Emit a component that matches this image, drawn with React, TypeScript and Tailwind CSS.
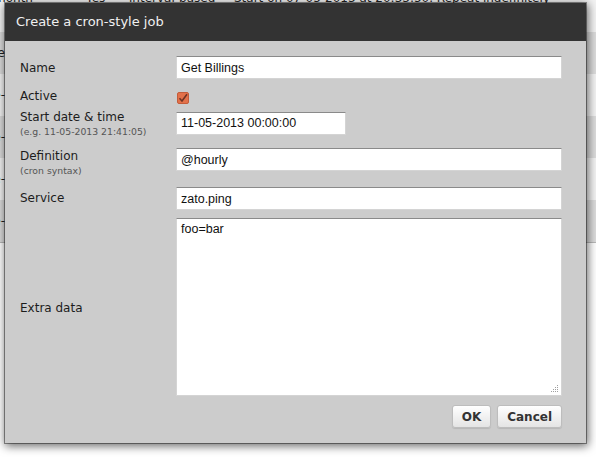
import React from "react"

const rows = [
  { bg: "bg-[#dcdcdc]", text: "e" },
  { bg: "bg-[#f3f3f3]", text: "e-" },
  { bg: "bg-[#dcdcdc]", text: "e-" },
  { bg: "bg-[#f3f3f3]", text: "e-" },
  { bg: "bg-[#dcdcdc]", text: "e-" },
]

function Field({ value, width = "w-[386px]" }: { value: string; width?: string }) {
  return (
    <input
      readOnly
      value={value}
      className={`${width} h-[23px] bg-white border border-[#d4d4d4] border-t-[#8a8a8a] px-[4px] text-[12.5px] leading-[15px] text-[#111] outline-none font-['Liberation_Sans',Arial,sans-serif]`}
    />
  )
}

function Label({ title, hint }: { title: string; hint?: string }) {
  return (
    <div className="w-[156px] shrink-0">
      <div className="text-[12px] leading-[15px] text-[#1c1c1c]">{title}</div>
      {hint && <div className="text-[9.3px] leading-[13px] text-[#555]">{hint}</div>}
    </div>
  )
}

export default function App() {
  return (
    <div className="relative w-[596px] h-[457px] overflow-hidden bg-white font-['DejaVu_Sans',Verdana,sans-serif]">
      {/* table behind the dialog */}
      <div className="flex flex-col">
        <div className="h-[32px] bg-[#f3f3f3] overflow-hidden">
          <div className="-mt-[9px] flex text-[12px] leading-[14px] text-[#222] whitespace-nowrap">
            <span className="w-[92px] -ml-[6px]">month</span>
            <span className="w-[43px]">Yes</span>
            <span className="w-[105px]">interval-based</span>
            <span>Start on 07-05-2013 at 20:33:50. Repeat indefinitely</span>
          </div>
        </div>
        {rows.map((r, i) => (
          <div key={i} className={`h-[42px] ${r.bg} flex items-center overflow-hidden`}>
            <span className="text-[12px] text-[#222] -ml-[8px] w-[13px] text-right">{r.text}</span>
          </div>
        ))}
        <div className="h-px bg-[#b8b8b8]" />
      </div>

      {/* dialog */}
      <div className="absolute left-[5px] top-[3px] w-[581px] h-[440px] bg-[#cccccc] shadow-[0_0_0_1px_rgba(0,0,0,0.4),1px_2px_9px_1px_rgba(0,0,0,0.6)] flex flex-col">
        <div className="h-[38px] bg-[#333333] flex items-center pl-[11px] text-[13px] text-[#f0f0f0]">
          Create a cron-style job
        </div>

        <div className="flex flex-col pl-[15px] pt-[15px]">
          <div className="flex items-start">
            <div className="mt-[5px]"><Label title="Name" /></div>
            <Field value="Get Billings" />
          </div>

          <div className="flex items-start mt-[9px]">
            <div className="mt-[1px]"><Label title="Active" /></div>
            <div className="mt-[4px] ml-[1px] w-[12px] h-[12px] rounded-[2px] bg-[#e3714a] border border-[#c45c3a] flex items-center justify-center">
              <svg width="10" height="10" viewBox="0 0 10 10">
                <path d="M1.5 5.2 L4 8 L9 1.2" fill="none" stroke="#6e3424" strokeWidth="1.6" />
              </svg>
            </div>
          </div>

          <div className="flex items-start mt-[5px]">
            <div className="mt-[1px]"><Label title="Start date & time" hint="(e.g. 11-05-2013 21:41:05)" /></div>
            <div className="mt-[1px]"><Field value="11-05-2013 00:00:00" width="w-[170px]" /></div>
          </div>

          <div className="flex items-start mt-[10px]">
            <div className="mt-[1px]"><Label title="Definition" hint="(cron syntax)" /></div>
            <Field value="@hourly" />
          </div>

          <div className="flex items-start mt-[10px]">
            <div className="mt-[4px]"><Label title="Service" /></div>
            <Field value="zato.ping" />
          </div>

          <div className="flex items-center mt-[8px]">
            <div className="mt-[2px]"><Label title="Extra data" /></div>
            <div className="relative">
              <textarea
                readOnly
                value="foo=bar"
                className="block w-[386px] h-[178px] resize-none bg-white border border-[#d4d4d4] border-t-[#8a8a8a] px-[4px] pt-[3px] text-[12.5px] leading-[15px] text-[#111] outline-none font-['Liberation_Sans',Arial,sans-serif]"
              />
              <svg className="absolute right-[3px] bottom-[3px]" width="9" height="9" viewBox="0 0 9 9">
                <g fill="#a0a0a0">
                  <rect x="7" y="1" width="1" height="1" />
                  <rect x="5" y="3" width="1" height="1" />
                  <rect x="7" y="3" width="1" height="1" />
                  <rect x="3" y="5" width="1" height="1" />
                  <rect x="5" y="5" width="1" height="1" />
                  <rect x="7" y="5" width="1" height="1" />
                  <rect x="1" y="7" width="1" height="1" />
                  <rect x="3" y="7" width="1" height="1" />
                  <rect x="5" y="7" width="1" height="1" />
                  <rect x="7" y="7" width="1" height="1" />
                </g>
              </svg>
            </div>
          </div>

          <div className="flex justify-end gap-[6px] mt-[9px] pr-[24px]">
            <button className="h-[23px] px-[9px] rounded-[3px] border border-[#bdbdbd] bg-gradient-to-b from-white to-[#e4e4e4] text-[12px] font-bold text-[#333] shadow-[0_1px_1px_rgba(0,0,0,0.1)]">
              OK
            </button>
            <button className="h-[23px] px-[9px] rounded-[3px] border border-[#bdbdbd] bg-gradient-to-b from-white to-[#e4e4e4] text-[12px] font-bold text-[#333] shadow-[0_1px_1px_rgba(0,0,0,0.1)]">
              Cancel
            </button>
          </div>
        </div>
      </div>
    </div>
  )
}
